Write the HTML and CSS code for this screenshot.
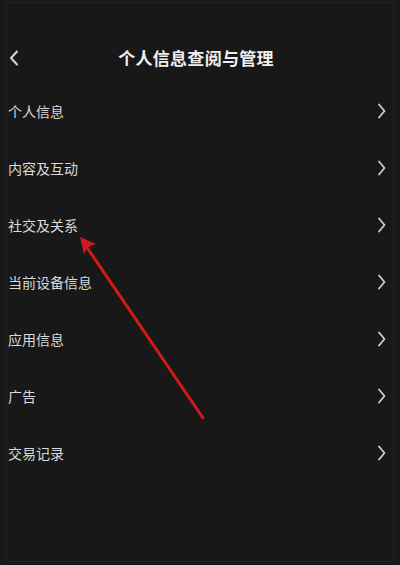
FILE: index.html
```html
<!DOCTYPE html>
<html lang="zh">
<head>
<meta charset="utf-8">
<title>个人信息查阅与管理</title>
<link rel="stylesheet" href="styles.css">
</head>
<body>
<div class="frame">
  <header class="header">
    <svg class="back" width="10" height="16" viewBox="0 0 10 16"><path d="M8 1.5 L2 8 L8 14.5" fill="none" stroke="#d6d6d6" stroke-width="2" stroke-linecap="round" stroke-linejoin="round"/></svg>
    <h1 class="title">个人信息查阅与管理</h1>
    <span class="spacer"></span>
  </header>
  <ul class="list">
    <li class="row"><span>个人信息</span><svg class="chev" width="9" height="16" viewBox="0 0 9 16"><path d="M2 1.5 L7.5 8 L2 14.5" fill="none" stroke="#cfcfcf" stroke-width="1.8" stroke-linecap="round" stroke-linejoin="round"/></svg></li>
    <li class="row"><span>内容及互动</span><svg class="chev" width="9" height="16" viewBox="0 0 9 16"><path d="M2 1.5 L7.5 8 L2 14.5" fill="none" stroke="#cfcfcf" stroke-width="1.8" stroke-linecap="round" stroke-linejoin="round"/></svg></li>
    <li class="row"><span>社交及关系</span><svg class="chev" width="9" height="16" viewBox="0 0 9 16"><path d="M2 1.5 L7.5 8 L2 14.5" fill="none" stroke="#cfcfcf" stroke-width="1.8" stroke-linecap="round" stroke-linejoin="round"/></svg></li>
    <li class="row"><span>当前设备信息</span><svg class="chev" width="9" height="16" viewBox="0 0 9 16"><path d="M2 1.5 L7.5 8 L2 14.5" fill="none" stroke="#cfcfcf" stroke-width="1.8" stroke-linecap="round" stroke-linejoin="round"/></svg></li>
    <li class="row"><span>应用信息</span><svg class="chev" width="9" height="16" viewBox="0 0 9 16"><path d="M2 1.5 L7.5 8 L2 14.5" fill="none" stroke="#cfcfcf" stroke-width="1.8" stroke-linecap="round" stroke-linejoin="round"/></svg></li>
    <li class="row"><span>广告</span><svg class="chev" width="9" height="16" viewBox="0 0 9 16"><path d="M2 1.5 L7.5 8 L2 14.5" fill="none" stroke="#cfcfcf" stroke-width="1.8" stroke-linecap="round" stroke-linejoin="round"/></svg></li>
    <li class="row"><span>交易记录</span><svg class="chev" width="9" height="16" viewBox="0 0 9 16"><path d="M2 1.5 L7.5 8 L2 14.5" fill="none" stroke="#cfcfcf" stroke-width="1.8" stroke-linecap="round" stroke-linejoin="round"/></svg></li>
  </ul>
</div>
<svg class="arrow" width="400" height="565" viewBox="0 0 400 565">
  <line x1="203" y1="418" x2="86" y2="246" stroke="#d11b1b" stroke-width="3" stroke-linecap="round"/>
  <polygon points="80,237 96,244 88,247 84,254" fill="#d11b1b"/>
</svg>
</body>
</html>
```

FILE: styles.css
```css
html, body {
  margin: 0;
  padding: 0;
  background: #181818;
}
body {
  position: relative;
  width: 400px;
  height: 565px;
  overflow: hidden;
  font-family: "Noto Sans CJK SC", "Noto Sans", sans-serif;
}
.frame {
  box-sizing: border-box;
  margin: 2px 6px 0 6px;
  height: 560px;
  border: 1px solid #232323;
  display: flex;
  flex-direction: column;
}
.header {
  display: flex;
  align-items: center;
  height: 79px;
  box-sizing: border-box;
  padding: 43px 0 12px 2px;
}
.back {
  display: block;
  width: 10px;
  height: 16px;
}
.title {
  flex: 1;
  margin: 0;
  text-align: center;
  font-size: 17px;
  font-weight: bold;
  color: #efefef;
  line-height: 24px;
  letter-spacing: 0.3px;
}
.spacer {
  width: 20px;
}
.list {
  list-style: none;
  margin: 0;
  padding: 0;
}
.row {
  height: 57px;
  display: flex;
  align-items: center;
  justify-content: space-between;
  padding: 0 7px 0 1px;
  font-size: 14px;
  color: #dadada;
}
.chev {
  display: block;
}
.arrow {
  position: absolute;
  left: 0;
  top: 0;
  pointer-events: none;
}
```
